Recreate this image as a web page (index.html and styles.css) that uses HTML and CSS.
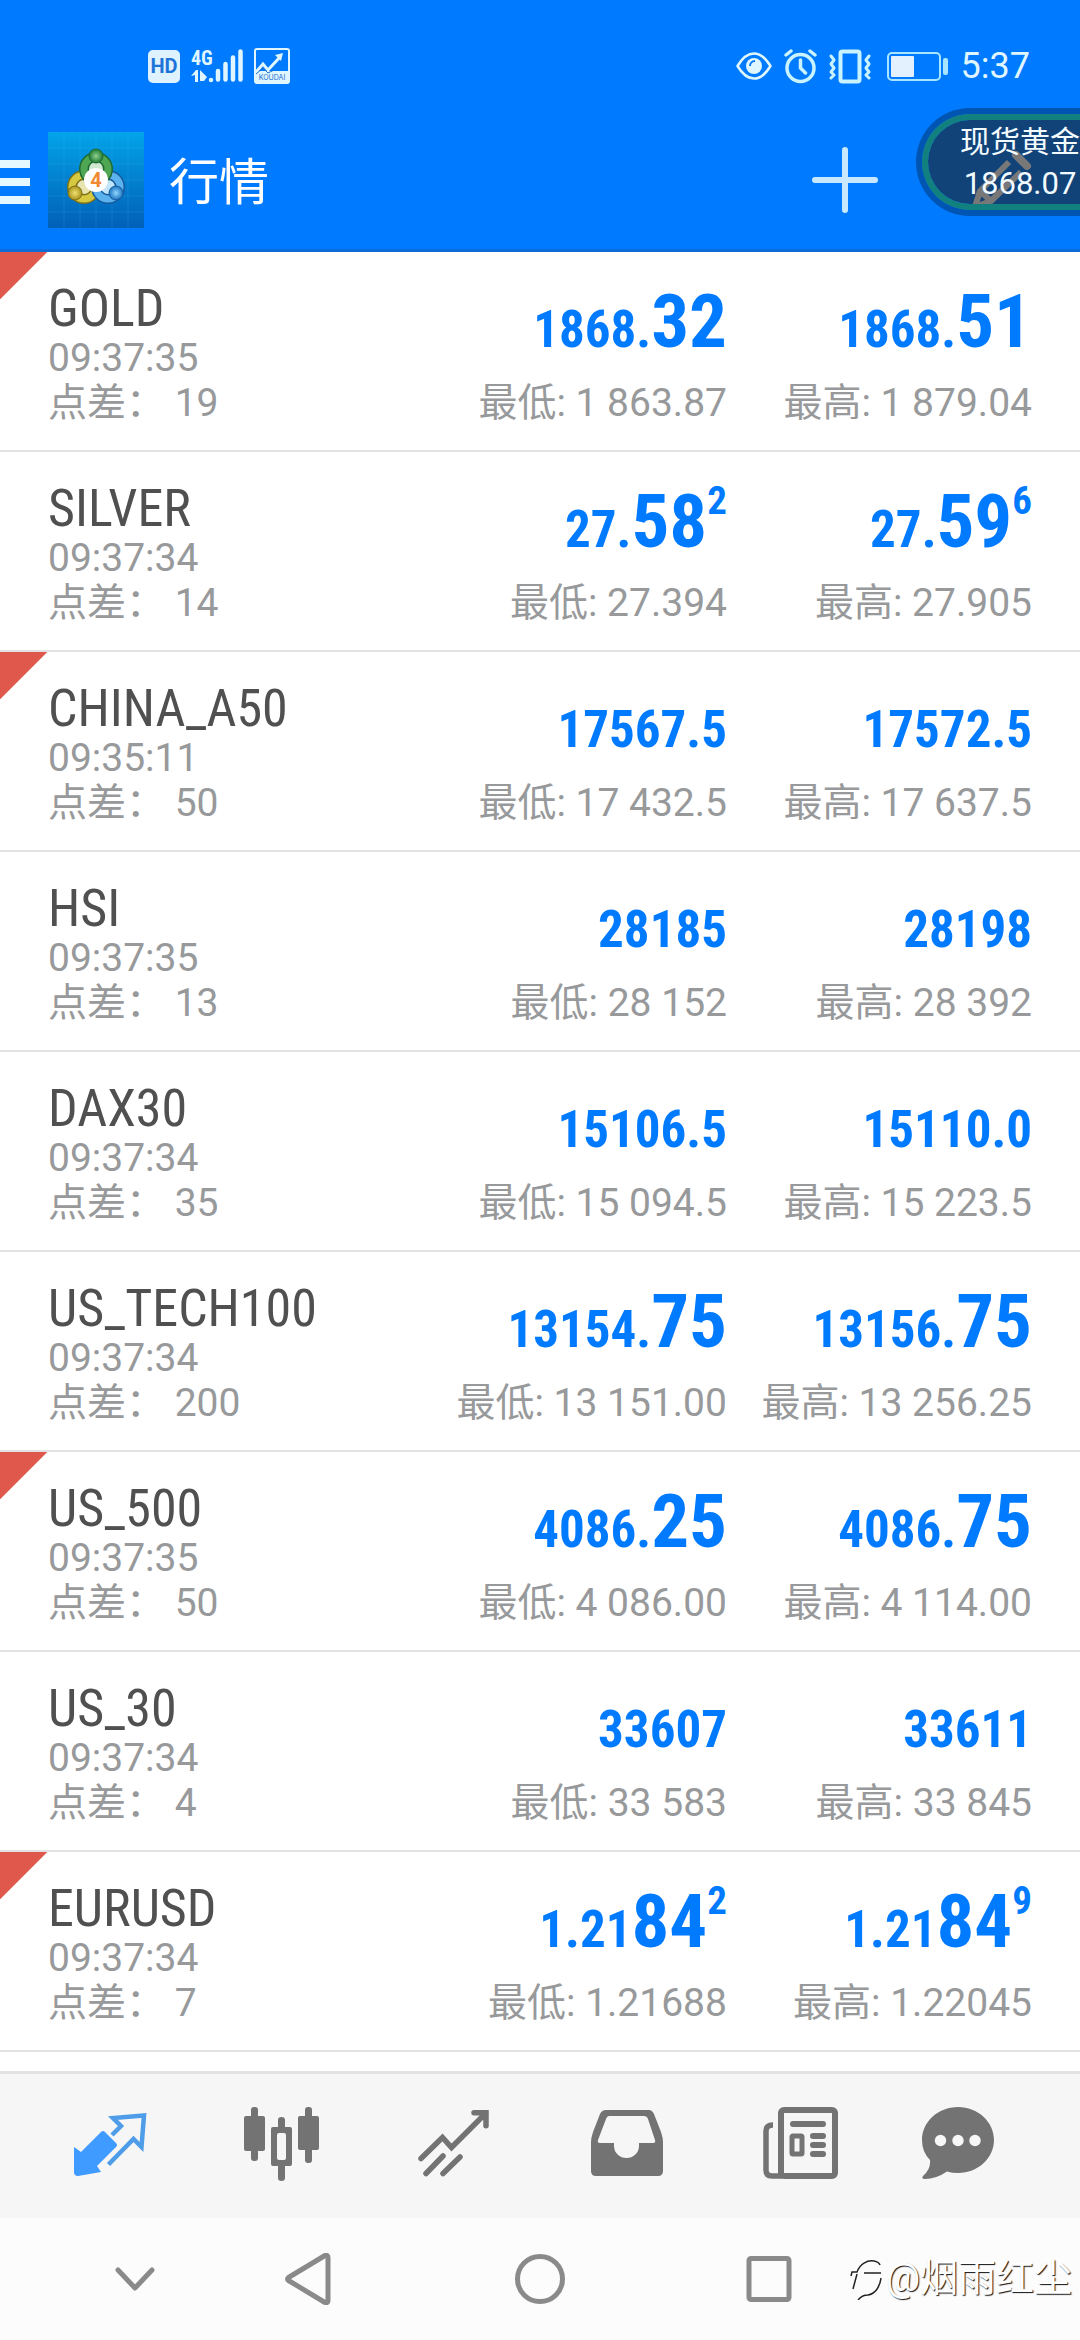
FILE: index.html
```html
<!DOCTYPE html>
<html lang="zh-CN">
<head>
<meta charset="utf-8">
<meta name="viewport" content="width=device-width, initial-scale=1">
<title>行情</title>
<link rel="stylesheet" href="styles.css">
</head>
<body>
<header class="header">
  <div class="status">
    <div class="status-group status-left">
      <span class="hd">HD</span>
      <svg class="signal" width="52" height="36" viewBox="0 0 52 36" aria-hidden="true">
        <text class="signal-text" x="0" y="17">4G</text>
        <path d="M0 28l5-6h2v12H4v-7zM9 22l7 7-3 4h-4z" fill="#dff6ff"/>
        <path d="M20 32v0M27 23v8.500M34.500 16v15.500M42 9.500v22M49.500 3.500v28" stroke="#dff6ff" stroke-width="4.500" stroke-linecap="round"/>
      </svg>
      <svg class="koudai" width="36" height="36" viewBox="0 0 36 36" aria-hidden="true">
        <rect x="1" y="1" width="34" height="34" rx="2" fill="none" stroke="#dff6ff" stroke-width="2"/>
        <path d="M1 23h34v12H1z" fill="#dff6ff"/>
        <path d="M2 24l7-8 5 6L26 9" fill="none" stroke="#dff6ff" stroke-width="3"/>
        <path d="M21 7l8-2-2 8z" fill="#dff6ff"/>
        <path d="M2 26l7-6 5 5 6-3" fill="none" stroke="#1d6fd0" stroke-width="1"/>
        <text class="koudai-text" x="18" y="32">KOUDAI</text>
      </svg>
    </div>
    <div class="status-group status-right">
      <svg width="36" height="36" viewBox="0 0 36 36" aria-hidden="true">
        <path d="M1.500 18Q9 5.500 18 5.500T34.500 18Q27 30.500 18 30.500T1.500 18z" fill="none" stroke="#dff6ff" stroke-width="2.500" stroke-linejoin="round"/>
        <circle cx="18" cy="18" r="8" fill="#dff6ff"/><path d="M14 18a5 5 0 0 1 5-5" fill="none" stroke="#0a7cfa" stroke-width="2"/>
      </svg>
      <svg width="33" height="36" viewBox="0 0 33 36" aria-hidden="true" fill="none" stroke="#c9f4ff" stroke-width="3.500" stroke-linecap="round">
        <circle cx="16.500" cy="20" r="13.500"/><path d="M16.500 12v8l5 5M2 7l5-4M31 7l-5-4"/>
      </svg>
      <svg width="42" height="36" viewBox="0 0 42 36" aria-hidden="true" fill="none" stroke="#c9f4ff" stroke-linecap="round" stroke-linejoin="round">
        <rect x="11.500" y="3.500" width="19" height="30" rx="2" stroke-width="4"/>
        <path d="M2 8l3 4-3 4 3 4-3 4 3 3-3 3M40 8l-3 4 3 4-3 4 3 4-3 3 3 3" stroke-width="3"/>
      </svg>
      <svg class="battery" width="62" height="36" viewBox="0 0 62 36" aria-hidden="true">
        <rect x="1" y="5" width="52" height="27" rx="4" fill="none" stroke="#a8e6ff" stroke-width="2"/>
        <rect x="4" y="8" width="23" height="21" rx="1" fill="#e3f1ff"/><rect x="56" y="10" width="5" height="17" rx="2" fill="#a8e6ff"/>
      </svg>
      <span class="clock">5:37</span>
    </div>
  </div>
  <div class="appbar">
    <button class="icon-button" aria-label="菜单"><svg width="30" height="48" viewBox="0 0 30 48"><path d="M0 4h30v8H0zM0 22h30v8H0zM0 40h30v8H0z" fill="#e4f8ff"/></svg></button>
    <svg class="logo" width="96" height="96" viewBox="0 0 96 96" aria-hidden="true">
      <defs>
        <linearGradient id="sky" x1="0" y1="0" x2="0" y2="1"><stop offset="0" stop-color="#02a4ea"/><stop offset=".5" stop-color="#0280cf"/><stop offset="1" stop-color="#0160b8"/></linearGradient>
        <radialGradient id="green"><stop offset="0" stop-color="#8fd08a"/><stop offset="1" stop-color="#1e7a35"/></radialGradient>
        <radialGradient id="yellow"><stop offset="0" stop-color="#f0e070"/><stop offset="1" stop-color="#a8921c"/></radialGradient>
        <radialGradient id="blue"><stop offset="0" stop-color="#8fd6ff"/><stop offset="1" stop-color="#1d74c0"/></radialGradient>
      </defs>
      <path d="M0 0h96v96H0z" fill="url(#sky)"/>
      <path d="M16 0v96M32 0v96M48 0v96M64 0v96M80 0v96M0 16h96M0 32h96M0 48h96M0 64h96M0 80h96" stroke="#5cc6f2" stroke-opacity=".15"/>
      <circle cx="36" cy="55" r="12" fill="#e8e4b0" stroke="#7d7016" stroke-width="10"/><circle cx="36" cy="55" r="12" fill="none" stroke="#d6c83f" stroke-width="7"/>
      <circle cx="60" cy="55" r="12" fill="#bfe4f8" stroke="#155a9c" stroke-width="10"/><circle cx="60" cy="55" r="12" fill="none" stroke="#5cb2ec" stroke-width="7"/>
      <circle cx="48" cy="37" r="12" fill="#cfe8cf" stroke="#1d6b33" stroke-width="10"/><circle cx="48" cy="37" r="12" fill="none" stroke="#4fa653" stroke-width="7"/>
      <circle cx="48" cy="24" r="7" fill="url(#green)" stroke="#1d6b33"/><circle cx="27" cy="61" r="7" fill="url(#yellow)" stroke="#7d7016"/><circle cx="68" cy="61" r="7" fill="url(#blue)" stroke="#155a9c"/>
      <circle cx="48" cy="48" r="12" fill="#fff"/>
      <text class="logo-text" x="48" y="55">4</text>
    </svg>
    <h1 class="title">行情</h1>
    <button class="icon-button" aria-label="添加"><svg width="66" height="66" viewBox="0 0 66 66"><path d="M33 3v60M3 33h60" stroke="#c8e8ff" stroke-width="6" stroke-linecap="round"/></svg></button>
    <button class="icon-button edit" aria-label="编辑"><svg width="60" height="60" viewBox="0 0 60 60" fill="none" stroke="#fff" stroke-width="6" stroke-linejoin="round"><path d="M37 12L8 41 3 57l16-6 30-29M8 41l11 10"/><path d="M44 5l11 11" stroke-width="8" stroke-linecap="round"/></svg></button>
  </div>
</header>
<aside class="float"><div class="float-inner"><span class="float-name">现货黄金</span><span>1868.07</span></div></aside>

<main class="quotes">
  <ul class="list">
    <li class="row flag"><div class="info"><h2>GOLD</h2><p>09:37:35</p><p>点差： 19</p></div><div class="quote"><p class="price"><span>1868.</span>32</p><p>最低: 1 863.87</p></div><div class="quote"><p class="price"><span>1868.</span>51</p><p>最高: 1 879.04</p></div></li>
    <li class="row"><div class="info"><h2>SILVER</h2><p>09:37:34</p><p>点差： 14</p></div><div class="quote"><p class="price"><span>27.</span>58<sup>2</sup></p><p>最低: 27.394</p></div><div class="quote"><p class="price"><span>27.</span>59<sup>6</sup></p><p>最高: 27.905</p></div></li>
    <li class="row flag"><div class="info"><h2>CHINA_A50</h2><p>09:35:11</p><p>点差： 50</p></div><div class="quote"><p class="price"><span>17567.5</span></p><p>最低: 17 432.5</p></div><div class="quote"><p class="price"><span>17572.5</span></p><p>最高: 17 637.5</p></div></li>
    <li class="row"><div class="info"><h2>HSI</h2><p>09:37:35</p><p>点差： 13</p></div><div class="quote"><p class="price"><span>28185</span></p><p>最低: 28 152</p></div><div class="quote"><p class="price"><span>28198</span></p><p>最高: 28 392</p></div></li>
    <li class="row"><div class="info"><h2>DAX30</h2><p>09:37:34</p><p>点差： 35</p></div><div class="quote"><p class="price"><span>15106.5</span></p><p>最低: 15 094.5</p></div><div class="quote"><p class="price"><span>15110.0</span></p><p>最高: 15 223.5</p></div></li>
    <li class="row"><div class="info"><h2>US_TECH100</h2><p>09:37:34</p><p>点差： 200</p></div><div class="quote"><p class="price"><span>13154.</span>75</p><p>最低: 13 151.00</p></div><div class="quote"><p class="price"><span>13156.</span>75</p><p>最高: 13 256.25</p></div></li>
    <li class="row flag"><div class="info"><h2>US_500</h2><p>09:37:35</p><p>点差： 50</p></div><div class="quote"><p class="price"><span>4086.</span>25</p><p>最低: 4 086.00</p></div><div class="quote"><p class="price"><span>4086.</span>75</p><p>最高: 4 114.00</p></div></li>
    <li class="row"><div class="info"><h2>US_30</h2><p>09:37:34</p><p>点差： 4</p></div><div class="quote"><p class="price"><span>33607</span></p><p>最低: 33 583</p></div><div class="quote"><p class="price"><span>33611</span></p><p>最高: 33 845</p></div></li>
    <li class="row flag"><div class="info"><h2>EURUSD</h2><p>09:37:34</p><p>点差： 7</p></div><div class="quote"><p class="price"><span>1.21</span>84<sup>2</sup></p><p>最低: 1.21688</p></div><div class="quote"><p class="price"><span>1.21</span>84<sup>9</sup></p><p>最高: 1.22045</p></div></li>
  </ul>
</main>

<nav class="tabs">
  <button class="tab active" aria-label="行情"><svg viewBox="0 0 96 96"><path d="M50 37l9-9-8-8 31-2.500L79.500 49l-8-8L46.500 66.500" fill="none" stroke="#4f9de8" stroke-width="4.500"/><path d="M12 49l7 5 20-20q2-2 4 0l11 11q2 2 0 4L35 68l4 6-23 4q-4 0-4-4z" fill="#3f9bff"/></svg></button>
  <button class="tab" aria-label="图表"><svg viewBox="0 0 96 96" fill="#737373"><rect x="10" y="18" width="21" height="35" rx="2"/><rect x="17" y="9" width="7" height="54" rx="3"/><path fill-rule="evenodd" d="M39 29h17q2 0 2 2v35q0 2-2 2H39q-2 0-2-2V31q0-2 2-2zm6 6q-2 0-2 2v23q0 2 2 2h5q2 0 2-2V37q0-2-2-2z"/><path d="M44 30v-8q0-3 3.500-3t3.500 3v8zM44 67v13q0 3 3.500 3t3.500-3V67z"/><rect x="64" y="18" width="21" height="34" rx="2"/><rect x="71" y="9" width="7" height="56" rx="3"/></svg></button>
  <button class="tab" aria-label="交易"><svg viewBox="0 0 96 96" fill="none" stroke="#737373" stroke-width="5.500" stroke-linecap="round"><path d="M15 60.500l21.500-21 9 10L80 15M68 14.800h12v13M37 58L20 75.500M54 59L37 75.500"/></svg></button>
  <button class="tab" aria-label="历史"><svg viewBox="0 0 96 96" fill="#737373"><path fill-rule="evenodd" d="M28 12h43q3 0 5 4l7 18q2 6 2 10v29q0 5-5 5H18q-5 0-5-5V44q0-4 2-10l7-18q2-4 6-4zm3 6q-2 0-3 3l-8 21q-1 3 2 3h14v3a12.500 12 0 0 0 25 0v-3h14q3 0 2-3l-7-21q-1-3-4-3z"/></svg></button>
  <button class="tab" aria-label="新闻"><svg viewBox="0 0 96 96" fill="none" stroke="#737373" stroke-width="6"><rect x="31" y="12" width="54" height="66" rx="3"/><path d="M23 27q-7 0-7 6v39q0 6 6 6h10" stroke-width="5.500"/><path d="M43 26h30M63 38h10M63 47h10M63 56h10" stroke-linecap="round"/><rect x="42" y="38" width="10" height="18" rx="1" stroke-width="5"/></svg></button>
  <button class="tab" aria-label="消息"><svg viewBox="0 0 96 96"><path d="M36 9C56 9 72 24 72 42S56 75 36 75q-6 0-11-1.500Q14 81 3 81q-4 0-2-3 8-7 7-16Q0 54 0 42C0 24 16 9 36 9z" fill="#737373"/><g fill="#f7f7f7"><circle cx="18.500" cy="42.500" r="5.700"/><circle cx="36" cy="42.500" r="5.700"/><circle cx="53" cy="42.500" r="5.700"/></g></svg></button>
</nav>
<footer class="system">
  <button class="icon-button" aria-label="收起"><svg width="52" height="52" viewBox="0 0 52 52"><path d="M9 17l17 18 17-18"/></svg></button>
  <button class="icon-button" aria-label="返回"><svg width="52" height="52" viewBox="0 0 52 52"><path d="M6.500 24.500q-2 1.500 0 3L43 49.500q3 1 3-2v-43q0-3-3-2z"/></svg></button>
  <button class="icon-button" aria-label="主页"><svg width="52" height="52" viewBox="0 0 52 52"><circle cx="26" cy="26" r="22.500"/></svg></button>
  <button class="icon-button" aria-label="最近"><svg width="52" height="52" viewBox="0 0 52 52"><rect x="6" y="5.500" width="40" height="41" rx="2"/></svg></button>
  <div class="watermark"><svg width="36" height="44" viewBox="0 0 36 44" aria-hidden="true" fill="none" stroke="#222" stroke-width="1.500"><path d="M1 20l1-4h5C10 8 17 4 24 5q5 1 6 4M14 17h17M7 18L3 33M31 22c-1 9-6 16-13 17q-6 0-10 5"/></svg><span>@烟雨红尘</span></div>
</footer>
</body>
</html>
```
FILE: styles.css
```css
* { box-sizing: border-box; }
body {
  margin: 0;
  min-height: 100vh;
  display: flex;
  flex-direction: column;
  position: relative;
  background: #fff;
  font-family: Roboto, "Noto Sans CJK SC", sans-serif;
}
h1, h2, p, ul { margin: 0; padding: 0; font-weight: 400; }
button { border: 0; padding: 0; background: none; cursor: pointer; }
svg { display: block; flex: none; }

/* Header */
.header { background: #007aff; border-bottom: 3px solid #0d6cd8; }
.status {
  display: flex;
  justify-content: space-between;
  align-items: center;
  height: 132px;
  padding: 0 50px 0 148px;
}
.status-group { display: flex; align-items: center; }
.status-left { gap: 11px; }
.status-right { gap: 12px; }
.hd {
  width: 32px;
  border-radius: 5px;
  background: #dff2ff;
  color: #1f74d8;
  font-size: 20px;
  font-weight: 700;
  line-height: 33px;
  text-align: center;
}
.signal-text { font: 700 20px "Roboto Condensed", sans-serif; fill: #dff6ff; }
.koudai-text { font: 7px Inter, sans-serif; fill: #1d6fd0; text-anchor: middle; }
.battery { margin-left: 4px; }
.clock { color: #dff6ff; font-size: 36px; line-height: 40px; }

.appbar { display: flex; align-items: center; padding: 0 48px 21px 0; }
.logo { margin-left: 18px; }
.logo-text { font: 700 20px Roboto, sans-serif; fill: #f08a32; text-anchor: middle; }
.title { flex: 1; margin-left: 25px; padding-top: 6px; color: #fff; font-size: 50px; line-height: 64px; }
.edit { margin-left: 94px; }

/* Floating ticker that hangs off the right edge */
.float {
  position: absolute;
  top: 108px;
  right: 0;
  border: 6px solid rgba(0, 0, 0, .3);
  border-right: 0;
  border-radius: 54px 0 0 54px;
}
.float-inner {
  display: flex;
  flex-direction: column;
  align-items: center;
  width: 158px;
  height: 96px;
  padding: 1px 0 0 32px;
  border: 6px solid #12807f;
  border-right: 0;
  border-radius: 48px 0 0 48px;
  background: rgba(30, 30, 30, .6);
  background-clip: padding-box;
  color: #f2fbff;
  font-size: 31px;
  line-height: 42px;
  white-space: nowrap;
}
.float-name { font-size: 30px; }

/* Quotes */
.quotes { flex: 1; }
.list { list-style: none; }
.row {
  display: grid;
  grid-template-columns: minmax(0, 1fr) 31% 31%;
  padding: 29px 48px 24px;
  border-bottom: 2px solid #e3e3e5;
  color: #97999b;
  font-size: 39px;
  line-height: 45px;
  white-space: nowrap;
}
.flag { background: linear-gradient(135deg, #e0584b 33px, transparent 34px); }
.row h2 {
  color: #505050;
  font-family: "Roboto Condensed", sans-serif;
  font-size: 52px;
  line-height: 55px;
}
.quote { display: flex; flex-direction: column; justify-content: space-between; text-align: right; }
.price {
  color: #007aff;
  font: 700 75px/80px "Roboto Condensed", sans-serif;
}
.price span { font-size: 51px; line-height: 52px; }
.price sup { font-size: 39px; line-height: 40px; vertical-align: 33px; }

/* Bottom tabs */
.tabs {
  display: grid;
  grid-template-columns: repeat(6, 1fr);
  padding: 24px;
  border-top: 3px solid #e3e3e3;
  background: #f6f6f6;
}
.tab { display: flex; justify-content: center; }
.tab svg { width: 96px; height: 96px; }

/* System navigation */
.system {
  position: relative;
  display: grid;
  grid-template-columns: 174fr 172fr 292fr 166fr 228fr;
  align-items: center;
  height: 122px;
  padding-left: 48px;
  background: #fcfcfc;
}
.system .icon-button { display: flex; justify-content: center; }
.system .icon-button svg { fill: none; stroke: #8a8a8a; stroke-width: 5; stroke-linecap: round; stroke-linejoin: round; }
.watermark {
  position: absolute;
  right: 8px;
  bottom: 38px;
  display: flex;
  align-items: center;
  color: #fff;
  font-size: 38px;
  line-height: 48px;
  text-shadow: 1px 1px 1px #111;
}
```
